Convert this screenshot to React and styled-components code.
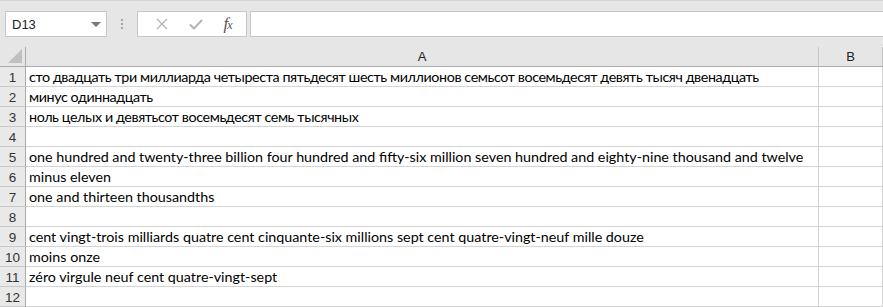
import React from 'react';
import styled, { createGlobalStyle } from 'styled-components';

const Global = createGlobalStyle`
  html, body {
    margin: 0;
    padding: 0;
    background: #fff;
    overflow: hidden;
  }
`

const Page = styled.div`
  width: 883px;
  height: 307px;
  overflow: hidden;
`

const Toolbar = styled.div`
  height: 47px;
  box-sizing: border-box;
  background: #e6e6e6;
  border-top: 1px solid #d6d6d6;
  display: flex;
  align-items: flex-start;
  padding: 10px 0 0 5px;
`

const NameBox = styled.div`
  width: 102px;
  height: 26px;
  box-sizing: border-box;
  background: #fff;
  border: 1px solid #c6c6c6;
  display: flex;
  align-items: center;
  justify-content: space-between;
  padding: 0 5px 0 6px;
  font-family: "Liberation Sans", Arial, sans-serif;
  font-size: 13px;
  color: #222;
`

const Caret = styled.span`
  width: 0;
  height: 0;
  border-left: 5px solid transparent;
  border-right: 5px solid transparent;
  border-top: 5px solid #777;
`

const Grip = styled.div`
  width: 30px;
  height: 26px;
  display: flex;
  flex-direction: column;
  align-items: center;
  justify-content: center;
  gap: 2px;
  span {
    width: 2px;
    height: 2px;
    background: #a8a8a8;
  }
`

const FxBox = styled.div`
  width: 110px;
  height: 26px;
  box-sizing: border-box;
  background: #fff;
  border: 1px solid #c6c6c6;
  display: flex;
  align-items: center;
  justify-content: space-around;
  padding: 0 4px 0 8px;
`

const FxLabel = styled.span`
  font-family: "Liberation Serif", "Times New Roman", serif;
  font-style: italic;
  font-size: 17px;
  color: #555;
  letter-spacing: -1px;
  sub {
    font-size: 12px;
    vertical-align: baseline;
  }
`

const FormulaInput = styled.div`
  flex: 1;
  height: 26px;
  box-sizing: border-box;
  margin-left: 3px;
  background: #fff;
  border: 1px solid #c6c6c6;
  border-right: none;
`

const Sheet = styled.div`
  display: grid;
  grid-template-columns: 26px 793px 1fr;
  grid-auto-rows: 20px;
  font-family: Lato, "Liberation Sans", sans-serif;
  font-size: 14.3px;
`

const Head = styled.div`
  box-sizing: border-box;
  background: #e6e6e6;
  border-right: 1px solid ${p => (p.$strong ? '#ababab' : '#c6c6c6')};
  border-bottom: 1px solid #ababab;
  display: flex;
  align-items: center;
  justify-content: center;
  color: #222;
  font-family: "Liberation Sans", Arial, sans-serif;
  font-size: 13px;
  position: relative;
`

const Corner = styled.span`
  position: absolute;
  right: 3px;
  bottom: 3px;
  width: 0;
  height: 0;
  border-left: 14px solid transparent;
  border-bottom: 14px solid #c0c0c0;
`

const RowHead = styled.div`
  box-sizing: border-box;
  background: #e9e9e9;
  border-right: 1px solid #ababab;
  border-bottom: 1px solid #c8c8c8;
  display: flex;
  align-items: flex-end;
  justify-content: center;
  padding-bottom: 1px;
  color: #333;
  font-family: "Liberation Sans", Arial, sans-serif;
  font-size: 13.5px;
`

const Cell = styled.div`
  box-sizing: border-box;
  border-right: 1px solid #d4d4d4;
  border-bottom: 1px solid #d4d4d4;
  padding: 0 0 1px 3px;
  display: flex;
  align-items: flex-end;
  white-space: nowrap;
  overflow: visible;
  color: #000;
  line-height: 17px;
  letter-spacing: ${p => (p.$cyr ? '-0.4px' : '0')};
`

const rows = [
  'сто двадцать три миллиарда четыреста пятьдесят шесть миллионов семьсот восемьдесят девять тысяч двенадцать',
  'минус одиннадцать',
  'ноль целых и девятьсот восемьдесят семь тысячных',
  '',
  'one hundred and twenty-three billion four hundred and fifty-six million seven hundred and eighty-nine thousand and twelve',
  'minus eleven',
  'one and thirteen thousandths',
  '',
  'cent vingt-trois milliards quatre cent cinquante-six millions sept cent quatre-vingt-neuf mille douze',
  'moins onze',
  'zéro virgule neuf cent quatre-vingt-sept',
  '',
]

const App = () => (
  <Page>
    <Global />
    <Toolbar>
      <NameBox>
        D13
        <Caret />
      </NameBox>
      <Grip>
        <span />
        <span />
        <span />
      </Grip>
      <FxBox>
        <svg width="12" height="12" viewBox="0 0 12 12">
          <path d="M1 1 L11 11 M11 1 L1 11" stroke="#b4b4b4" strokeWidth="1.3" fill="none" />
        </svg>
        <svg width="14" height="11" viewBox="0 0 14 11">
          <path d="M1 5.5 L5 9.5 L13 1" stroke="#b4b4b4" strokeWidth="2" fill="none" />
        </svg>
        <FxLabel>f<sub>x</sub></FxLabel>
      </FxBox>
      <FormulaInput />
    </Toolbar>
    <Sheet>
      <Head $strong><Corner /></Head>
      <Head>A</Head>
      <Head>B</Head>
      {rows.map((text, i) => (
        <React.Fragment key={i}>
          <RowHead>{i + 1}</RowHead>
          <Cell $cyr={/[а-я]/.test(text)}>{text}</Cell>
          <Cell />
        </React.Fragment>
      ))}
    </Sheet>
  </Page>
)

export default App;
